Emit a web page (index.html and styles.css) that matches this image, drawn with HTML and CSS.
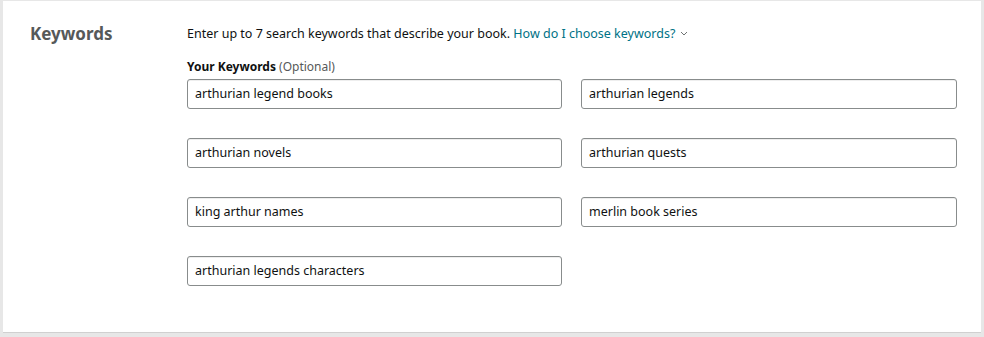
FILE: index.html
```html
<!DOCTYPE html>
<html>
<head>
<meta charset="utf-8">
<link rel="stylesheet" href="styles.css">
</head>
<body>
<div class="panel">
  <div class="label-col"><h2 class="title">Keywords</h2></div>
  <div class="content">
    <p class="desc">Enter up to 7 search keywords that describe your book. <a class="link" href="#">How do I choose keywords?</a><svg class="chev" width="8" height="5" viewBox="0 0 8 5"><path d="M1 1l3 3 3-3" fill="none" stroke="#6f7373" stroke-width="1"/></svg></p>
    <div class="field-label"><b>Your Keywords</b> <span class="opt">(Optional)</span></div>
    <div class="grid">
      <div class="input">arthurian legend books</div>
      <div class="input">arthurian legends</div>
      <div class="input">arthurian novels</div>
      <div class="input">arthurian quests</div>
      <div class="input">king arthur names</div>
      <div class="input">merlin book series</div>
      <div class="input">arthurian legends characters</div>
    </div>
  </div>
</div>
</body>
</html>
```
FILE: styles.css
```css
html, body { margin: 0; padding: 0; }
body {
  background: #e7e7e7;
  font-family: "Noto Sans", "Open Sans", sans-serif;
  color: #0f1111;
  width: 984px;
  height: 337px;
  overflow: hidden;
}
.panel {
  margin: 1px 3px 0 3px;
  height: 332px;
  box-sizing: border-box;
  background: #fff;
  border-bottom: 1px solid #d0d0d0;
  display: flex;
  padding: 21px 0 0 27px;
}
.label-col { width: 157px; flex: none; }
.title {
  margin: 0;
  font-size: 17px;
  font-weight: 700;
  color: #565959;
  line-height: 24px;
}
.content { flex: none; width: 770px; }
.desc {
  margin: 2px 0 0 0;
  font-size: 12.5px;
  line-height: 20px;
}
.link { color: #007185; text-decoration: none; }
.chev { margin-left: 5px; vertical-align: 2px; }
.field-label {
  margin-top: 15px;
  font-size: 12px;
  line-height: 16px;
}
.field-label b { font-weight: 700; }
.opt { color: #565959; }
.grid {
  margin-top: 4px;
  display: grid;
  grid-template-columns: 375px 376px;
  column-gap: 19px;
  row-gap: 29px;
}
.input {
  height: 30px;
  box-sizing: border-box;
  border: 1px solid #888c8c;
  border-radius: 3px;
  padding: 0 7px;
  font-size: 12.5px;
  line-height: 28px;
  box-shadow: 0 1px 0 rgba(255,255,255,.5), 0 1px 0 rgba(15,17,17,.07) inset;
}
```
